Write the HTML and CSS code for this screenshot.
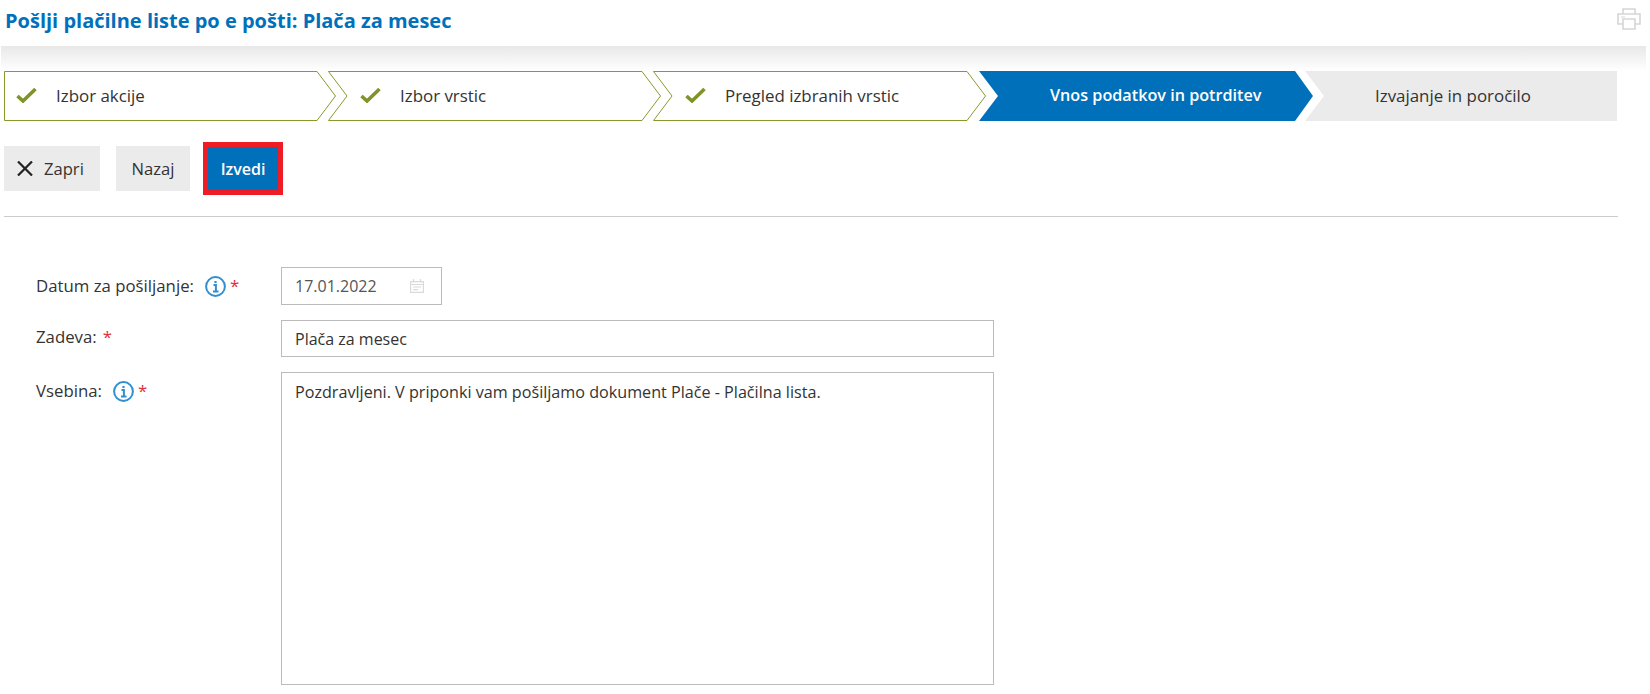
FILE: index.html
```html
<!DOCTYPE html>
<html lang="sl">
<head>
    <meta charset="UTF-8">
    <meta name="viewport" content="width=device-width, initial-scale=1.0">
    <title>Pošlji plačilne liste po e pošti</title>
    <link rel="stylesheet" href="styles.css">
</head>
<body>
    <header class="header">
        <h1 class="title">Pošlji plačilne liste po e pošti: Plača za mesec</h1>
        <svg class="print-icon" width="24" height="22" viewBox="0 0 24 22" fill="none" stroke="#d6d6d6" stroke-width="1.6">
            <path d="M6 6V1h12v5"/>
            <path d="M6 16H1V6h22v10h-5"/>
            <path d="M6 11h12v10H6z"/>
            <path d="M4 9h4" stroke-width="1"/>
        </svg>
    </header>
    <div class="shade"></div>

    <div class="steps">
        <div class="step step-first">
            <svg class="step-bg" width="332" height="50"><polygon points="0.5,0.5 313,0.5 331.5,25 313,49.5 0.5,49.5"/></svg>
            <svg class="check" width="21" height="16" viewBox="0 0 21 16"><path d="M1.5 9l5.5 5L19.5 2"/></svg>
            <span>Izbor akcije</span>
        </div>
        <div class="step step-done">
            <svg class="step-bg" width="333" height="50"><polygon points="0.5,0.5 314,0.5 332.5,25 314,49.5 0.5,49.5 19,25"/></svg>
            <svg class="check" width="21" height="16" viewBox="0 0 21 16"><path d="M1.5 9l5.5 5L19.5 2"/></svg>
            <span>Izbor vrstic</span>
        </div>
        <div class="step step-done">
            <svg class="step-bg" width="333" height="50"><polygon points="0.5,0.5 314,0.5 332.5,25 314,49.5 0.5,49.5 19,25"/></svg>
            <svg class="check" width="21" height="16" viewBox="0 0 21 16"><path d="M1.5 9l5.5 5L19.5 2"/></svg>
            <span>Pregled izbranih vrstic</span>
        </div>
        <div class="step step-active">Vnos podatkov in potrditev</div>
        <div class="step step-last">Izvajanje in poročilo</div>
    </div>

    <div class="actions">
        <button type="button" class="btn btn-close">
            <svg width="16" height="15" viewBox="0 0 16 15" fill="none" stroke="#222" stroke-width="2.2"><path d="M1 0.5l14 14M15 0.5l-14 14"/></svg>
            Zapri
        </button>
        <button type="button" class="btn btn-back">Nazaj</button>
        <button type="button" class="btn btn-run">Izvedi</button>
    </div>
    <hr class="divider">

    <form class="form">
        <div class="row row-date">
            <label class="label">Datum za pošiljanje:
                <svg class="info" width="21" height="21" viewBox="0 0 21 21"><circle cx="10.5" cy="10.5" r="9.4"/><path d="M8.5 9h2.4v6.5M8 15.5h5.5"/><path class="dot" d="M10.5 5v2"/></svg>
                <span class="req">*</span>
            </label>
            <div class="input input-date">
                17.01.2022
                <svg width="14" height="14" viewBox="0 0 14 14" fill="none" stroke="#dadada" stroke-width="1.2"><path d="M.6 2.6h12.8v10.8H.6zM.6 5.5h12.8M3.5 0v3.5M10.5 0v3.5M3 8h8M3 10.6h5"/></svg>
            </div>
        </div>
        <div class="row row-subject">
            <label class="label">Zadeva: <span class="req req-near">*</span></label>
            <input class="input input-wide" type="text" value="Plača za mesec">
        </div>
        <div class="row row-body">
            <label class="label">Vsebina:
                <svg class="info" width="21" height="21" viewBox="0 0 21 21"><circle cx="10.5" cy="10.5" r="9.4"/><path d="M8.5 9h2.4v6.5M8 15.5h5.5"/><path class="dot" d="M10.5 5v2"/></svg>
                <span class="req">*</span>
            </label>
            <textarea class="input input-wide textarea">Pozdravljeni. V priponki vam pošiljamo dokument Plače - Plačilna lista.</textarea>
        </div>
    </form>
</body>
</html>
```

FILE: styles.css
```css
body {
    margin: 0;
    font-family: "Open Sans", Arial, sans-serif;
    font-size: 16px;
    color: #333;
    background: #fff;
    overflow: hidden;
}
.header {
    height: 46px;
    display: flex;
    align-items: flex-start;
    justify-content: space-between;
    padding: 0 9px 0 5px;
    box-sizing: border-box;
}
.title {
    margin: 8px 0 0;
    font-size: 20px;
    line-height: 25px;
    font-weight: 700;
    color: #0070ba;
}
.print-icon {
    margin-top: 8px;
}
.shade {
    width: 1645px;
    margin-left: 1px;
    height: 25px;
    background: linear-gradient(#e8e8e8, #fff);
}
.steps {
    display: flex;
    margin-left: 4px;
}
.step {
    position: relative;
    height: 50px;
    box-sizing: border-box;
    display: flex;
    align-items: center;
    padding-bottom: 2px;
    font-size: 16.9px;
    font-weight: 500;
    flex-shrink: 0;
}
.step span {
    position: relative;
    margin-left: 19px;
}
.step-bg {
    position: absolute;
    left: 0;
    top: 0;
}
.step-bg polygon {
    fill: #fff;
    stroke: #86992b;
    stroke-width: 1;
}
.check {
    position: relative;
    fill: none;
    stroke: #7f9428;
    stroke-width: 3.6;
}
.step-first {
    width: 332px;
    padding-left: 12px;
}
.step-done {
    width: 333px;
    margin-left: -8px;
    padding-left: 32px;
}
.step-active {
    width: 334px;
    margin-left: -7px;
    padding-left: 71px;
    background: #0070ba;
    color: #fff;
    font-size: 16.2px;
    font-weight: 600;
    clip-path: polygon(0 0, 316px 0, 100% 50%, 316px 100%, 0 100%, 19px 50%);
}
.step-last {
    width: 312px;
    margin-left: -8px;
    padding-left: 70px;
    background: #ebebeb;
    clip-path: polygon(0 0, 100% 0, 100% 100%, 0 100%, 19px 50%);
}
.actions {
    display: flex;
    align-items: center;
    margin: 21px 0 0 4px;
}
.btn {
    height: 45px;
    border: none;
    font-family: inherit;
    font-size: 16.6px;
    font-weight: 500;
    color: #333;
    background: #ebebeb;
    display: flex;
    align-items: center;
    justify-content: center;
    padding: 0;
}
.btn-close {
    width: 96px;
    justify-content: flex-start;
    padding-left: 13px;
    gap: 11px;
}
.btn-back {
    width: 74px;
    margin-left: 16px;
}
.btn-run {
    width: 80px;
    height: 53px;
    margin-left: 13px;
    background: #0070ba;
    color: #fff;
    font-size: 16px;
    font-weight: 600;
    border: 5px solid #ee1c25;
}
.divider {
    margin: 21px 32px 0 4px;
    border: none;
    border-top: 1px solid #ccc;
}
.form {
    margin: 50px 0 0 36px;
}
.row {
    display: flex;
    align-items: flex-start;
    margin-bottom: 15px;
}
.row-date .label {
    padding-top: 8px;
}
.row-subject .label {
    padding-top: 6px;
}
.row-body .label {
    padding-top: 8px;
}
.label {
    width: 245px;
    flex-shrink: 0;
    font-size: 16.8px;
    font-weight: 500;
    display: flex;
    align-items: center;
    line-height: 22px;
}
.info {
    margin-left: 11px;
    fill: none;
    stroke: #2f8fd0;
    stroke-width: 2;
}
.info .dot {
    stroke-width: 2.2;
}
.req {
    margin-left: 4px;
    color: #e0303a;
}
.req-near {
    margin-left: 6px;
}
.input {
    box-sizing: border-box;
    border: 1px solid #bbb;
    font-family: inherit;
    font-size: 16px;
    color: #333;
    padding: 0 13px;
    background: #fff;
}
.input-date {
    width: 161px;
    height: 38px;
    display: flex;
    align-items: center;
    justify-content: space-between;
    padding-right: 17px;
    color: #555;
}
.input-wide {
    display: block;
    width: 713px;
    height: 37px;
}
.textarea {
    height: 313px;
    padding-top: 8px;
    line-height: 22px;
    font-size: 16.15px;
    resize: none;
}
```
